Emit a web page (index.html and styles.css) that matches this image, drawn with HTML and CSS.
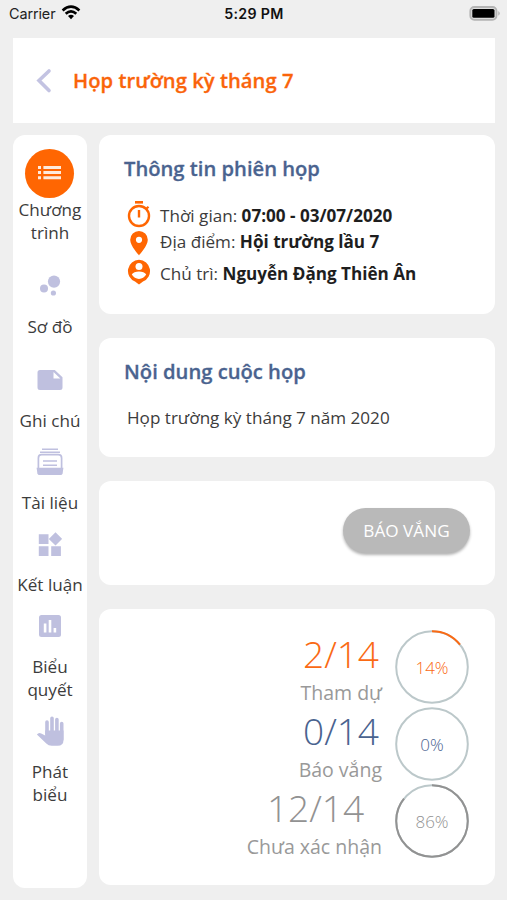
FILE: index.html
```html
<!DOCTYPE html>
<html lang="vi">
<head>
<meta charset="utf-8">
<title>Họp trường kỳ tháng 7</title>
<link rel="stylesheet" href="styles.css">
</head>
<body>
<div class="status">
  <div class="carrier"><span>Carrier</span>
    <svg width="20" height="15" viewBox="0 0 20 15"><g fill="none" stroke="#000" stroke-width="2.7"><path d="M1.6 5.4Q10-2 18.4 5.4"/><path d="M4.7 8.8Q10 4.1 15.3 8.8"/></g><path d="M7 11Q10 8.6 13 11L10 14.2Z"/></svg>
  </div>
  <div class="clock">5:29 PM</div>
  <svg class="battery" width="32" height="15" viewBox="0 0 32 15"><rect x="1.300" y="1" width="26.200" height="12.800" rx="4" fill="#ddd" stroke="#b4b4b4" stroke-width="1.800"/><rect x="3.300" y="3" width="22.200" height="8.800" rx="1.600"/><path d="M29.400 5v4.800q2.600-2.400 0-4.800Z" fill="#aaa"/></svg>
</div>
<header class="header">
  <svg class="back" width="18" height="26" viewBox="0 0 18 26"><path d="M14 3 4 12.500l10 10" fill="none" stroke="#c3c3e2" stroke-width="3.600" stroke-linecap="round" stroke-linejoin="miter"/></svg>
  <h1>Họp trường kỳ tháng 7</h1>
</header>
<div class="layout">
  <nav class="side">
    <a class="item active"><span class="slot"><span class="disc"><svg width="24" height="16" viewBox="0 0 24 16"><path fill="#ffeadb" d="M0 .9h3v3H0zM5.400.9H23v3H5.400zM0 6.100h3v3H0zM5.400 6.100H23v3H5.400zM0 11.300h3v3H0zM5.400 11.300H23v3H5.400z"/></svg></span></span><span class="label">Chương<br>trình</span></a>
    <a class="item tall"><span class="slot"><svg width="26" height="26" viewBox="0 0 26 26"><circle cx="17" cy="8.600" r="6.100"/><circle cx="7" cy="15.400" r="4"/><circle cx="16.400" cy="20" r="2.600"/></svg></span><span class="label">Sơ đồ</span></a>
    <a class="item tall"><span class="slot"><svg width="26" height="22" viewBox="0 0 26 22"><path fill-rule="evenodd" d="M3 1h14.800l7.700 7.200V18.500a2.500 2.500 0 0 1-2.500 2.500H3a2.500 2.500 0 0 1-2.500-2.500v-15A2.500 2.500 0 0 1 3 1Zm13.500 2v6.500h6.800Z"/></svg></span><span class="label">Ghi chú</span></a>
    <a class="item"><span class="slot"><svg width="28" height="28" viewBox="0 0 28 28"><path d="M6 .6h16v1.400H6zM4 3.400h20v1.500H4zM7 12.200h14v1.500H7zM7 16.400h14v1.500H7z"/><path d="M2.400 20V10q0-3.300 3.300-3.300h16.600q3.300 0 3.300 3.300v10" fill="none" stroke="#bfc0df" stroke-width="1.700"/><path d="M.6 19.800h26.800l-.8 5.700q-.4 1.500-2 1.500H3.400q-1.600 0-2-1.500Z"/></svg></span><span class="label">Tài liệu</span></a>
    <a class="item"><span class="slot"><svg width="24" height="24" viewBox="0 0 24 24"><path d="M.8 2.200h9.700v9.700H.8zM.8 14.200h9.700v9.700H.8zM13.200 14.200h9.700v9.700h-9.700zM17.500.2l6.700 6.700-6.700 6.700-6.700-6.700Z"/></svg></span><span class="label">Kết luận</span></a>
    <a class="item"><span class="slot"><svg width="24" height="24" viewBox="0 0 24 24"><rect x="1" y="1" width="22" height="22" rx="2.500"/><path fill="#fff" d="M5.800 9.500h2.600v9H5.800zM10.700 6h2.600v12.500h-2.600zM15.600 14h2.600v4.500h-2.600z"/></svg></span><span class="label">Biểu<br>quyết</span></a>
    <a class="item"><span class="slot"><svg width="28" height="32" viewBox="0 0 28 32"><path d="M11 7v12M16 3.300v16M20.900 4.500v15M25.700 8.500v16" fill="none" stroke="#bfc0df" stroke-width="3.600" stroke-linecap="round"/><path d="M9.200 15.500h18.300v9.500q0 5.800-5.800 5.800h-6q-3.200 0-5.400-2.400L.9 19.500q1.600-2.300 4.300-1.100l4 2.200Z"/></svg></span><span class="label">Phát<br>biểu</span></a>
  </nav>
  <main class="main">
    <section class="card info">
      <h2>Thông tin phiên họp</h2>
      <div class="row r1"><svg width="24" height="28" viewBox="0 0 24 28"><g fill="none" stroke="#ff6602"><circle cx="12" cy="16" r="10" stroke-width="2.400"/><path d="M12 10v7.500" stroke-width="2.400"/><path d="M8 2.300h8" stroke-width="2.600"/><path d="m18.500 9.500 3-2.800" stroke-width="2.200"/></g></svg><p>Thời gian: <b>07:00 - 03/07/2020</b></p></div>
      <div class="row r2"><svg width="24" height="26" viewBox="0 0 24 26"><path fill="#ff6602" fill-rule="evenodd" d="M12 1a8.800 8.800 0 0 1 8.800 8.800C20.800 16 12 25.300 12 25.300S3.200 16 3.200 9.800A8.800 8.800 0 0 1 12 1Zm0 5.700a3.100 3.100 0 1 0 0 6.200 3.100 3.100 0 0 0 0-6.200Z"/></svg><p>Địa điểm: <b>Hội trường lầu 7</b></p></div>
      <div class="row r3"><svg width="24" height="26" viewBox="0 0 24 26"><path fill="#ff6602" d="M12 .8a11.200 11.200 0 0 1 4 21.600l-4 3-4-3A11.200 11.200 0 0 1 12 .8Z"/><circle cx="12" cy="7.500" r="3.500" fill="#fff"/><path fill="#fff" d="M4.800 15.600c2-4 12.400-4 14.400 0-3 5.700-11.400 5.700-14.400 0Z"/></svg><p>Chủ trì: <b>Nguyễn Đặng Thiên Ân</b></p></div>
    </section>
    <section class="card content">
      <h2>Nội dung cuộc họp</h2>
      <p>Họp trường kỳ tháng 7 năm 2020</p>
    </section>
    <section class="card action"><button>BÁO VẮNG</button></section>
    <section class="card stats">
      <div class="stat orange"><div class="figures"><div class="num">2/14</div><div class="cap">Tham dự</div></div>
        <div class="ring"><svg viewBox="0 0 74 74"><circle cx="37" cy="37" r="35.800"/><circle class="arc" cx="37" cy="37" r="35.800" pathLength="100" stroke-dasharray="14.300 100"/></svg><span>14%</span></div></div>
      <div class="stat blue"><div class="figures"><div class="num">0/14</div><div class="cap">Báo vắng</div></div>
        <div class="ring"><svg viewBox="0 0 74 74"><circle cx="37" cy="37" r="35.800"/></svg><span>0%</span></div></div>
      <div class="stat gray"><div class="figures"><div class="num">12/14</div><div class="cap">Chưa xác nhận</div></div>
        <div class="ring"><svg viewBox="0 0 74 74"><circle cx="37" cy="37" r="35.800"/><circle class="arc" cx="37" cy="37" r="35.800" pathLength="100" stroke-dasharray="85.700 100"/></svg><span>86%</span></div></div>
    </section>
  </main>
</div>
</body>
</html>
```
FILE: styles.css
```css
* { box-sizing: border-box; }
body { margin: 0; width: 507px; height: 900px; overflow: hidden; background: #efefef; font-family: "Open Sans", "Noto Sans", sans-serif; color: #3c3c3c; }
h1, h2, p { margin: 0; white-space: nowrap; }
svg { display: block; flex: none; }
.status { height: 38px; padding: 0 6px 0 9px; display: grid; grid-template-columns: 1fr auto 1fr; align-items: start; font: 14.4px/27px Inter, sans-serif; color: #222; }
.carrier { display: flex; gap: 6px; letter-spacing: -.1px; }
.carrier svg { margin-top: 5px; }
.clock { font-weight: 600; font-size: 14.2px; letter-spacing: .35px; color: #111; padding-right: 2px; }
.battery { justify-self: end; margin-top: 6px; }
.header { margin: 0 12px 0 13px; height: 85px; background: #fff; display: flex; align-items: center; padding-left: 22px; }
.header h1 { font-size: 20.2px; line-height: 26px; padding-bottom: 2px; font-weight: 600; color: #fa640a; margin-left: 20px; -webkit-text-stroke: .3px #fa640a; letter-spacing: .05px; }
.layout { display: flex; gap: 12px; padding: 12px 12px 0 13px; }
.side { width: 74px; height: 753px; background: #fff; border-radius: 12px; }
.item { display: block; text-align: center; }
.slot { height: 59px; display: flex; align-items: center; justify-content: center; fill: #bfc0df; }
.tall .slot { height: 71px; padding-top: 12px; }
.active .slot { height: 63px; padding-top: 13px; }
.disc { width: 49px; height: 49px; border-radius: 50%; background: #ff6602; display: flex; align-items: center; justify-content: center; margin-right: 1px; }
.label { display: block; font-size: 17.1px; line-height: 23px; white-space: nowrap; }
.main { flex: 1; display: flex; flex-direction: column; gap: 24px; }
.card { background: #fff; border-radius: 12px; padding: 0 25px; }
h2 { font-size: 20.2px; line-height: 26px; padding-bottom: 2px; font-weight: 600; color: #4a638f; -webkit-text-stroke: .3px #4a638f; }
.info { height: 179px; padding-top: 20px; }
.row { display: flex; align-items: center; gap: 9px; margin-left: 3px; font-size: 17.1px; }
.row p { line-height: 26px; }
.row b { color: #1e1e1e; }
.r1 { height: 28px; margin-top: 17px; }
.r1 p { padding-top: 3px; }
.r2 { height: 29px; }
.r2 p { padding-bottom: 2px; }
.r3 { height: 30px; }
.r3 p { padding-top: 3px; }
.content { height: 119px; padding-top: 20px; }
.content p { font-size: 17.1px; line-height: 24px; margin: 20px 0 0 3px; }
.action { height: 104px; display: flex; justify-content: flex-end; align-items: flex-start; padding-top: 27px; }
button { width: 127px; height: 45px; padding: 0; border: 0; border-radius: 23px; background: #b9b9b9; color: #fff; font: 17.2px/45px "Open Sans", sans-serif; box-shadow: 0 2px 3px rgba(0,0,0,.3); }
.stats { height: 276px; padding: 21px 26px 0 25px; }
.stat { height: 77px; display: flex; justify-content: flex-end; gap: 13px; }
.figures { display: flex; flex-direction: column; align-items: flex-end; }
.num { font-size: 37px; line-height: 48px; padding-bottom: 2px; font-weight: 300; margin-right: 3px; }
.cap { font-size: 19.5px; line-height: 26px; color: #999; }
.ring { width: 74px; height: 74px; position: relative; display: flex; align-items: center; justify-content: center; font-size: 17px; font-weight: 300; }
.ring svg { position: absolute; inset: 0; transform: rotate(-90deg); fill: none; stroke: #bcc8ca; stroke-width: 2; }
.ring .arc { stroke: currentColor; }
.orange { color: #fa6a14; }
.blue { color: #4a638f; }
.gray { color: #929292; }
.gray .num { margin-right: 18px; }
```
